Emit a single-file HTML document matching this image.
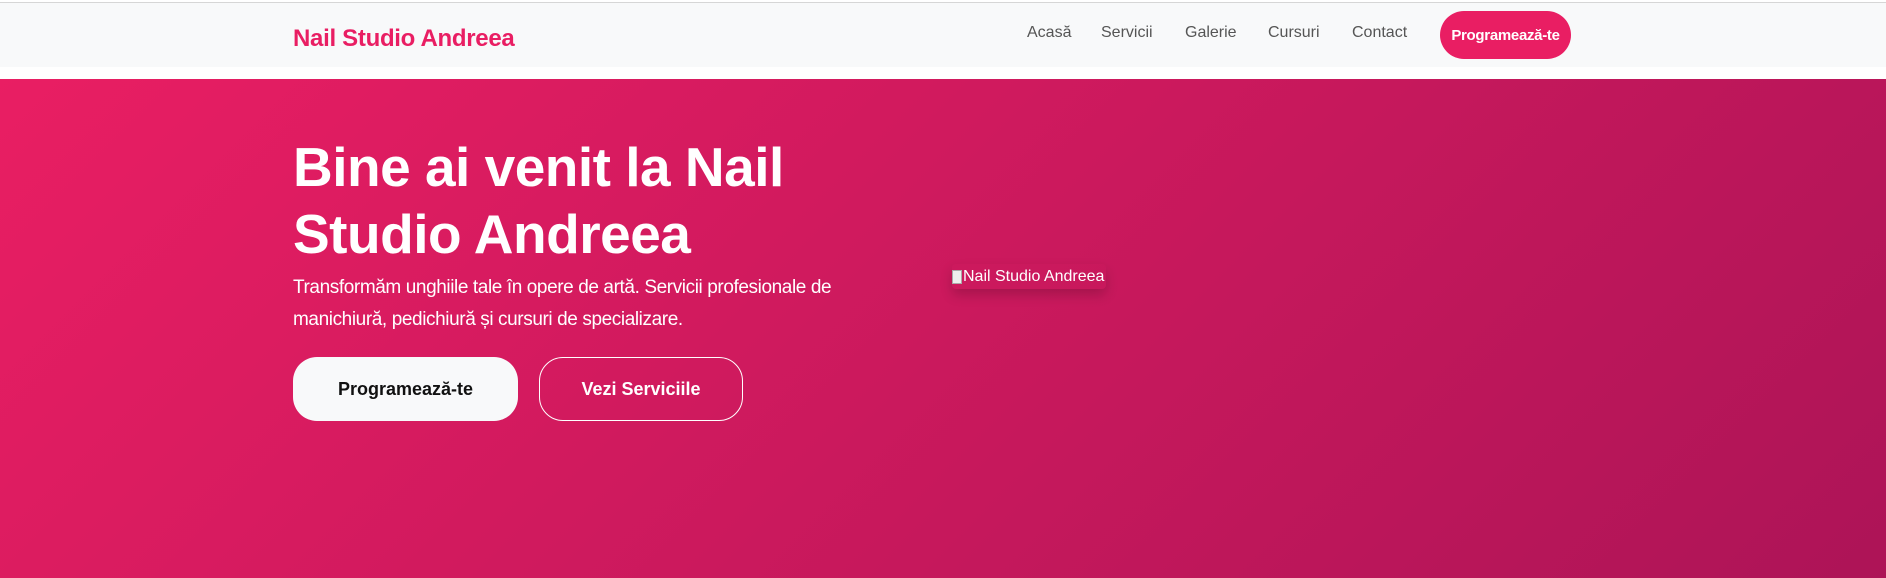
<!DOCTYPE html>
<html><head><meta charset="utf-8"><style>
*{margin:0;padding:0;box-sizing:border-box}
html,body{width:1886px;height:578px;overflow:hidden;background:#fff;font-family:"Liberation Sans",sans-serif}
.topline{position:absolute;left:0;top:2px;width:1886px;height:1px;background:#d6d6d6}
header{position:absolute;left:0;top:3px;width:1886px;height:64px;background:#f8f9fa}
.logo{position:absolute;left:293px;top:22px;font-size:24px;font-weight:bold;color:#e91e63;letter-spacing:-0.3px}
.nav a{position:absolute;top:21px;font-size:16px;color:#555;text-decoration:none}
.btnnav{position:absolute;left:1440px;top:8px;width:131px;height:48px;border-radius:24px;background:#e91e63;color:#fff;font-weight:bold;font-size:15px;display:flex;align-items:center;justify-content:center;letter-spacing:-0.3px}
.hero{position:absolute;left:0;top:79px;width:1886px;height:499px;background:linear-gradient(135deg,#e91e63 0%,#ad1457 100%)}
h1{position:absolute;left:293px;top:55px;width:600px;font-size:55px;line-height:67px;color:#fff;font-weight:bold;letter-spacing:-0.5px}
p{position:absolute;left:293px;top:193px;width:600px;font-size:19px;line-height:32px;color:#fff;font-weight:300;letter-spacing:-0.4px}
.b1{position:absolute;left:293px;top:278px;width:225px;height:64px;border-radius:24px;background:#f8f9fa;color:#111;font-weight:bold;font-size:18px;display:flex;align-items:center;justify-content:center}
.b2{position:absolute;left:539px;top:278px;width:204px;height:64px;border-radius:24px;border:1px solid #fff;color:#fff;font-weight:bold;font-size:18px;display:flex;align-items:center;justify-content:center}
.img{position:absolute;left:952px;top:185px;height:25px;padding:0 2px 0 0;color:#fff;font-size:16px;box-shadow:0 6px 12px rgba(0,0,0,.18);border-radius:4px;display:flex;align-items:center}
.ic{display:inline-block;width:10px;height:14px;background:#eee;border:1px solid #aaa;margin-right:1px;position:relative}
</style></head><body>
<div class="topline"></div>
<header>
<div class="logo">Nail Studio Andreea</div>
<div class="nav">
<a style="left:1027px">Acasă</a><a style="left:1101px">Servicii</a><a style="left:1185px">Galerie</a><a style="left:1268px">Cursuri</a><a style="left:1352px">Contact</a>
</div>
<div class="btnnav">Programează-te</div>
</header>
<div class="hero">
<h1>Bine ai venit la Nail Studio Andreea</h1>
<p>Transformăm unghiile tale în opere de artă. Servicii profesionale de manichiură, pedichiură și cursuri de specializare.</p>
<div class="b1">Programează-te</div>
<div class="b2">Vezi Serviciile</div>
<div class="img"><span class="ic"></span>Nail Studio Andreea</div>
</div>
</body></html>
